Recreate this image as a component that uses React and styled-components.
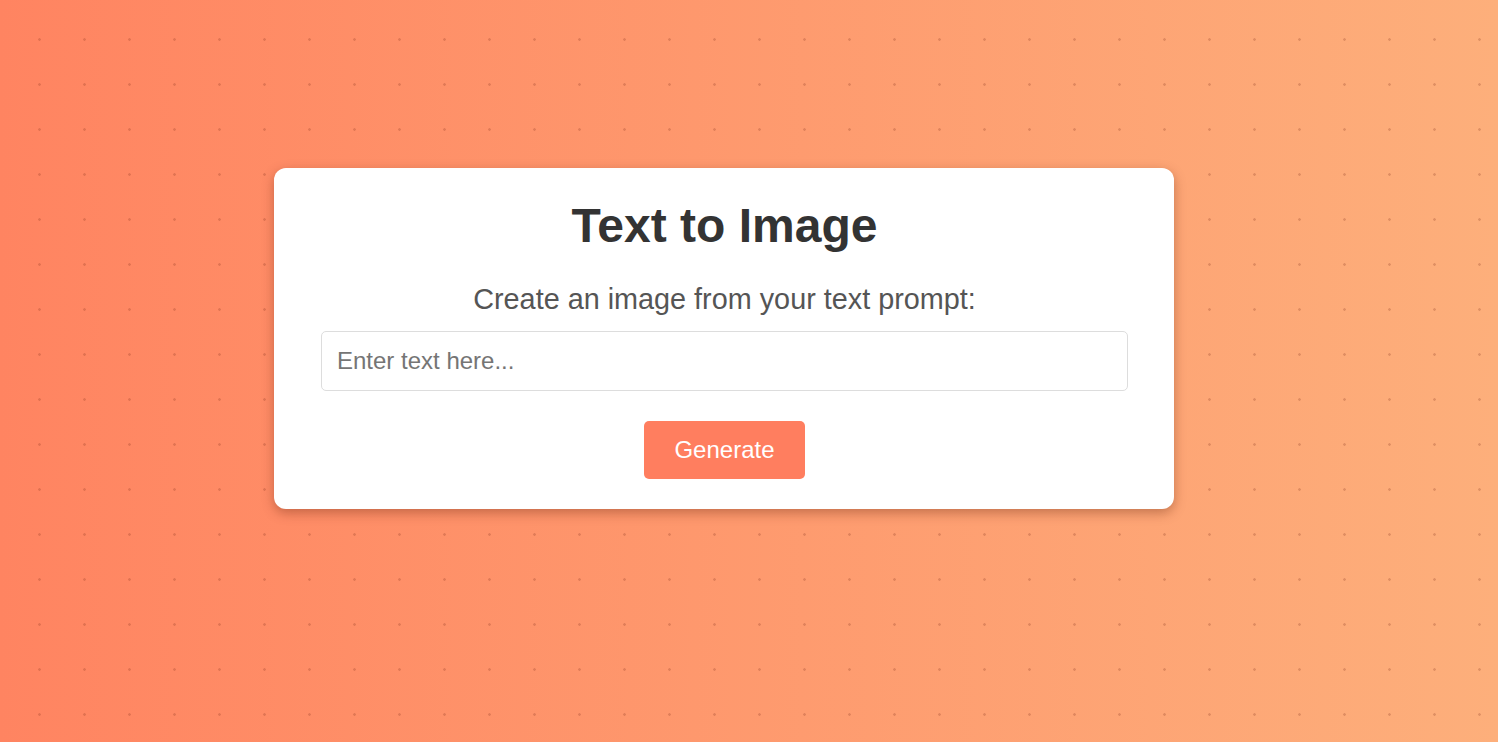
import React from "react";
import styled, { createGlobalStyle } from "styled-components";

const GlobalStyle = createGlobalStyle`
  * { box-sizing: border-box; }
  html, body {
    margin: 0;
    padding: 0;
    height: 100%;
  }
  body {
    font-family: "Liberation Sans", Arial, sans-serif;
    background-color: #ff9a6c;
    background-image:
      radial-gradient(circle, rgba(120, 40, 20, 0.22) 1px, transparent 1.6px),
      linear-gradient(to right, #ff8461, #fdaf7b);
    background-size: 45px 45px, 100% 100%;
    background-position: 17px 17px, 0 0;
    background-repeat: repeat, no-repeat;
  }
  #root { min-height: 100vh; }
`;

const Page = styled.main`
  min-height: 100vh;
  display: flex;
  justify-content: center;
  align-items: flex-start;
  padding: 168px 50px 0 0;
`;

const Card = styled.section`
  width: 900px;
  background: #ffffff;
  border-radius: 12px;
  box-shadow: 0 4px 12px rgba(90, 30, 10, 0.35);
  padding: 30px 46px 30px 47px;
  display: flex;
  flex-direction: column;
  align-items: center;
  text-align: center;
`;

const Title = styled.h1`
  margin: 0 0 30px;
  font-size: 48px;
  font-weight: 700;
  color: #333333;
`;

const Subtitle = styled.p`
  margin: 0 0 15px;
  font-size: 28.8px;
  color: #555555;
`;

const PromptInput = styled.input`
  width: 100%;
  height: 60px;
  padding: 15px;
  font-family: "Liberation Sans", Arial, sans-serif;
  font-size: 24px;
  color: #333;
  border: 1px solid #dddddd;
  border-radius: 5px;
  outline: none;
  margin: 0 0 30px;
  &::placeholder { color: #757575; }
`;

const Button = styled.button`
  padding: 15px 30px;
  height: 58px;
  font-family: "Liberation Sans", Arial, sans-serif;
  font-size: 24px;
  color: #ffffff;
  background: #ff7e5f;
  border: none;
  border-radius: 5px;
  cursor: pointer;
`;

export default function App() {
  return (
    <>
      <GlobalStyle />
      <Page>
        <Card>
          <Title>Text to Image</Title>
          <Subtitle>Create an image from your text prompt:</Subtitle>
          <PromptInput type="text" placeholder="Enter text here..." />
          <Button type="button">Generate</Button>
        </Card>
      </Page>
    </>
  );
}
